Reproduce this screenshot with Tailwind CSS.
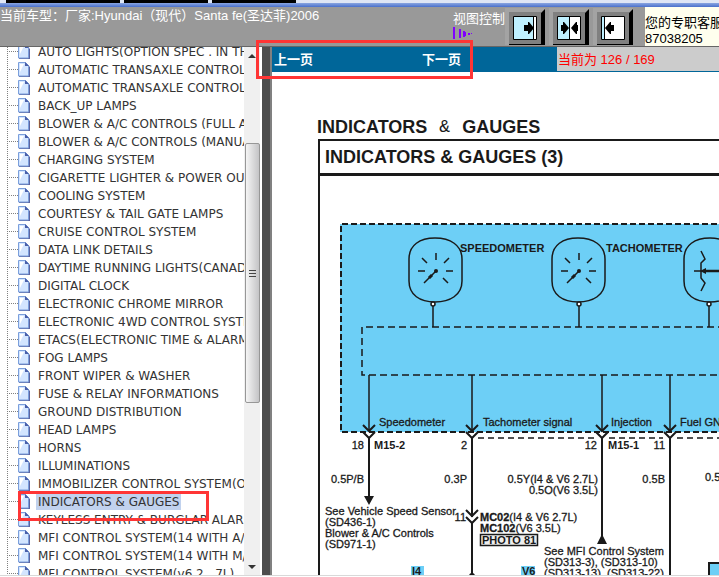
<!DOCTYPE html>
<html lang="zh">
<head>
    <meta charset="UTF-8"/>
    <meta name="viewport" content="width=device-width, initial-scale=1"/>
    <title>电路图 - INDICATORS &amp; GAUGES</title>
    <script src="https://cdn.jsdelivr.net/npm/@tailwindcss/browser@4"></script>
</head>
<body class="relative flex flex-col h-screen overflow-hidden bg-white font-['Liberation_Sans','Noto_Sans_CJK_SC',sans-serif]">
<!-- window frame -->
<div class="flex gap-1 shrink-0 h-[3px] pl-1.5 bg-[#dfe6f5]">
    <div class="w-[114px] bg-black"></div>
    <div class="w-[84px] bg-black"></div>
    <div class="w-[84px] bg-black"></div>
</div>
<div class="shrink-0 h-1 bg-linear-to-b from-[#8aa5e0] to-[#4a70cc]"></div>

<header class="flex shrink-0 h-10 bg-[#999999] border-b border-[#666666] text-white overflow-hidden">
    <div class="flex-1 pt-px text-[13px] leading-4 whitespace-nowrap">当前车型：厂家:Hyundai（现代）Santa fe(圣达菲)2006</div>
    <div class="w-[52px] pt-1 text-[13px] leading-4 whitespace-nowrap">
        视图控制
        <svg class="w-5 h-3" viewBox="0 0 20 12" fill="#8000ff">
            <path d="M0 0h2v12h-2zM6 2h2v9h-2zM10 4h2v6h-2zM12 5h1v4h-1zM15 6h2v2h-2zM18 6h1v1h-1z"/>
        </svg>
    </div>
    <div class="flex gap-1 shrink-0 pt-px">
        <button class="w-10 h-[37px]" aria-label="显示目录">
            <svg class="w-10 h-[37px]" viewBox="0 0 40 37">
                <path d="M0 0h40v37H0z" fill="#a3a3a3"/>
                <path d="M4 4h32v32H4z" fill="#808080"/>
                <path d="M40 1v36H4v-1h32V5z"/>
                <path d="M8.500 8.500h23v23h-23z" fill="#fff" stroke="#000"/>
                <path d="M9 9h19v22H9z" fill="#bff0ff"/>
                <path d="M28 9h1v22h-1zM19 17h4v-3h1l5 6-5 6h-1v-3h-4z"/>
            </svg>
        </button>
        <button class="w-10 h-[37px]" aria-label="左右分栏">
            <svg class="w-10 h-[37px]" viewBox="0 0 40 37">
                <path d="M0 0h40v37H0z" fill="#a3a3a3"/>
                <path d="M4 4h32v32H4z" fill="#808080"/>
                <path d="M40 1v36H4v-1h32V5z"/>
                <path d="M8.500 8.500h23v23h-23z" fill="#fff" stroke="#000"/>
                <path d="M9 9h11v22H9z" fill="#bff0ff"/>
                <path d="M20 9h1v22h-1zM12 17h2v-3h1l5 6-5 6h-1v-3h-2zM29 17h-1v-3h-1l-5 6 5 6h1v-3h1z"/>
            </svg>
        </button>
        <button class="w-10 h-[37px]" aria-label="隐藏目录">
            <svg class="w-10 h-[37px]" viewBox="0 0 40 37">
                <path d="M0 0h40v37H0z" fill="#a3a3a3"/>
                <path d="M4 4h32v32H4z" fill="#808080"/>
                <path d="M40 1v36H4v-1h32V5z"/>
                <path d="M8.500 8.500h23v23h-23z" fill="#fff" stroke="#000"/>
                <path d="M9 9h2v22H9z" fill="#bff0ff"/>
                <path d="M11 9h1v22h-1zM21 17h-3v-3h-1l-5 6 5 6h1v-3h3z"/>
            </svg>
        </button>
    </div>
    <div class="w-[74px] ml-3 pt-2 bg-[#ffffee] text-black text-[13px] leading-4 whitespace-nowrap">您的专职客服<br/>87038205</div>
</header>

<div class="flex flex-1 min-h-0 mb-px border-b border-[#d9d9d9]">
    <!-- contents tree -->
    <nav class="w-[244px] shrink-0 overflow-hidden">
        <ul id="tree" class="-mt-1 ml-[7px] text-[12px] leading-[18px] text-[#333333] font-['DejaVu_Sans',sans-serif] whitespace-nowrap"></ul>
    </nav>

    <!-- tree scrollbar -->
    <div class="flex flex-col items-center w-[18px] shrink-0 bg-[#f0f0f0] border-r-2 border-white">
        <svg class="w-4 h-24 shrink-0" viewBox="0 0 16 96"><path d="M4 11l4-4 4 4z" fill="#333"/></svg>
        <div class="flex flex-col items-center justify-center gap-0.5 w-[15px] h-[260px] shrink-0 border border-[#979797] rounded-xs bg-linear-to-r from-[#f5f5f5] to-[#c4c4c6]">
            <div class="w-[7px] h-px bg-[#444444]"></div>
            <div class="w-[7px] h-px bg-[#444444]"></div>
            <div class="w-[7px] h-px bg-[#444444]"></div>
        </div>
        <svg class="w-4 h-4 mt-auto" viewBox="0 0 16 16"><path d="M4 6l4 4 4-4z" fill="#333"/></svg>
    </div>
    <div class="w-2 shrink-0 bg-[#4d4d4d]"></div>

    <main class="flex flex-col flex-1 min-w-0 border-l-2 border-[#808080]">
        <div class="flex shrink-0 h-[25px] bg-[#006699] text-[13px] leading-[25px]">
            <div class="flex flex-1 justify-between pl-0.5 pr-24 text-white font-bold">
                <a href="#">上一页</a>
                <a href="#">下一页</a>
            </div>
            <div class="w-[162px] h-6 pl-px bg-[#cccccc] text-[#ff0000]">当前为 126 / 169</div>
        </div>

        <article class="flex-1 min-h-0 pt-[46px] pl-[46px] overflow-hidden text-[#1a1a1a]">
            <h1 class="flex gap-3 -ml-px text-[18px] leading-[18px] font-bold whitespace-nowrap">
                INDICATORS <span class="font-normal font-['Liberation_Mono',monospace]">&amp;</span> GAUGES
            </h1>
            <section class="mt-[3px] border-t-2 border-l-2 border-[#1a1a1a]">
                <h2 class="pl-[5px] text-[18px] leading-8 font-bold border-b-3 border-[#1a1a1a] whitespace-nowrap">INDICATORS &amp; GAUGES (3)</h2>
                <svg class="block w-[460px] h-[400px]" viewBox="320 176 460 400" fill="none" stroke="#1a1a1a" stroke-width="1.500">
                    <!-- instrument cluster -->
                    <path d="M340 224h440v208H340z" fill="#6dcff6" stroke="none"/>
                    <path d="M780 224H341v208h439" stroke-width="2" stroke-dasharray="6 3"/>
                    <path d="M780 327H362v48h418" stroke-dasharray="7 4"/>
                    <path d="M478 438h118M609 438h54M677 438h103" stroke-dasharray="6 4"/>

                    <!-- gauges -->
                    <path id="dial" d="M409 259c0-14 11-21 26-21s27 7 27 21v22c0 14-12 21-27 21s-26-7-26-21z"/>
                    <use href="#dial" x="143"/>
                    <use href="#dial" x="275"/>
                    <g id="needle">
                        <path d="M436 253v7M422 258l5 5M449 258l-5 5M418 271h7M446 271h7M443 278l5 5M424 283l12-12"/>
                        <path d="M429 278l3-3" stroke-width="3"/>
                        <circle cx="436" cy="271" r="2" fill="#1a1a1a" stroke="none"/>
                    </g>
                    <use href="#needle" x="143"/>
                    <path d="M701 251l4 8-4 4v15l4 5-4 8M694 271h10"/>
                    <path d="M704 271h20" stroke-width="2.500"/>
                    <path d="M700 271l6-3v6z" fill="#1a1a1a" stroke="none"/>
                    <path d="M433 306v21M579 306v21M709 306v21"/>
                    <g fill="#fff">
                        <circle cx="433" cy="304" r="2"/>
                        <circle cx="579" cy="304" r="2"/>
                        <circle cx="709" cy="304" r="2"/>
                    </g>

                    <!-- wires -->
                    <path d="M369 375v56M472 375v56M602 375v56M670 375v56"/>
                    <path id="joint" d="M363 425l6 6 6-6M363 432l6 6 6-6" stroke-width="2"/>
                    <use href="#joint" x="103"/>
                    <use href="#joint" x="233"/>
                    <use href="#joint" x="301"/>
                    <use href="#joint" x="103" y="85"/>
                    <path d="M369 438v60M472 438v79M472 523v53M602 438v100M670 438v138" stroke-width="2"/>
                    <path d="M364 496h10l-5 9zM597 544h10l-5-10z" fill="#1a1a1a" stroke="none"/>
                    <circle cx="472" cy="576" r="3" fill="#1a1a1a" stroke="none"/>
                    <path d="M780 563h-71v13" stroke-width="2"/>
                    <path d="M710 564h70v12h-70zM411 566h13v10h-13zM521 566h14v10h-14z" fill="#6dcff6" stroke="none"/>
                    <path d="M480.500 534.500h57v11h-57z" fill="#eee"/>

                    <g class="text-[11px]" fill="#1a1a1a" stroke-width="0.300">
                        <text x="379" y="426">Speedometer</text>
                        <text x="483" y="426">Tachometer signal</text>
                        <text x="611" y="426">Injection</text>
                        <text x="680" y="426">Fuel GND</text>
                        <text x="364" y="449" text-anchor="end">18</text>
                        <text x="467" y="449" text-anchor="end">2</text>
                        <text x="597" y="449" text-anchor="end">12</text>
                        <text x="665" y="449" text-anchor="end">11</text>
                        <text x="364" y="483" text-anchor="end">0.5P/B</text>
                        <text x="467" y="483" text-anchor="end">0.3P</text>
                        <text x="598" y="483" text-anchor="end">0.5Y(I4 &amp; V6 2.7L)</text>
                        <text x="598" y="494" text-anchor="end">0.5O(V6 3.5L)</text>
                        <text x="665" y="483" text-anchor="end">0.5B</text>
                        <text x="705" y="481">0.5</text>
                        <text x="325" y="515">See Vehicle Speed Sensor</text>
                        <text x="325" y="526">(SD436-1)</text>
                        <text x="325" y="537">Blower &amp; A/C Controls</text>
                        <text x="325" y="548">(SD971-1)</text>
                        <text x="466" y="521" text-anchor="end">11</text>
                        <text x="544" y="555">See MFI Control System</text>
                        <text x="544" y="566">(SD313-3), (SD313-10)</text>
                        <text x="544" y="577">(SD313-13), (SD313-22)</text>
                        <text x="480" y="521"><tspan class="font-bold">MC02</tspan>(I4 &amp; V6 2.7L)</text>
                        <text x="480" y="532"><tspan class="font-bold">MC102</tspan>(V6 3.5L)</text>
                    </g>
                    <g class="text-[11px] font-bold" fill="#1a1a1a" stroke="none">
                        <text x="460" y="252">SPEEDOMETER</text>
                        <text x="606" y="252">TACHOMETER</text>
                        <text x="374" y="449">M15-2</text>
                        <text x="608" y="449">M15-1</text>
                        <text x="482" y="544">PHOTO 81</text>
                        <text x="412" y="575">I4</text>
                        <text x="522" y="575">V6</text>
                    </g>
                </svg>
            </section>
        </article>
    </main>
</div>

<!-- highlight frames -->
<div class="absolute left-[18px] top-[491px] w-[191px] h-[30px] border-3 border-[#ff3535] pointer-events-none"></div>
<div class="absolute left-64 top-10 w-[217px] h-[39px] border-3 border-[#ff3535] pointer-events-none"></div>

<script>
    const items = [
        'AUTO LIGHTS(OPTION SPEC . IN THE',
        'AUTOMATIC TRANSAXLE CONTROL',
        'AUTOMATIC TRANSAXLE CONTROL',
        'BACK_UP LAMPS',
        'BLOWER & A/C CONTROLS (FULL AUTO)',
        'BLOWER & A/C CONTROLS (MANUAL)',
        'CHARGING SYSTEM',
        'CIGARETTE LIGHTER & POWER OUTLET',
        'COOLING SYSTEM',
        'COURTESY & TAIL GATE LAMPS',
        'CRUISE CONTROL SYSTEM',
        'DATA LINK DETAILS',
        'DAYTIME RUNNING LIGHTS(CANADA)',
        'DIGITAL CLOCK',
        'ELECTRONIC CHROME MIRROR',
        'ELECTRONIC 4WD CONTROL SYSTEM',
        'ETACS(ELECTRONIC TIME & ALARM',
        'FOG LAMPS',
        'FRONT WIPER & WASHER',
        'FUSE & RELAY INFORMATIONS',
        'GROUND DISTRIBUTION',
        'HEAD LAMPS',
        'HORNS',
        'ILLUMINATIONS',
        'IMMOBILIZER CONTROL SYSTEM(ONLY',
        'INDICATORS & GAUGES',
        'KEYLESS ENTRY & BURGLAR ALARM',
        'MFI CONTROL SYSTEM(14 WITH A/T)',
        'MFI CONTROL SYSTEM(14 WITH M/T)',
        'MFI CONTROL SYSTEM(v6 2 . 7L)'
    ]
    const current = 'INDICATORS & GAUGES'

    // dotted branch lines + page icon
    const pageIcon = `
        <svg class="w-[29px] h-[18px] shrink-0" viewBox="0 0 29 18">
            <path d="M.5 0v18M2 8.500h9" fill="none" stroke="#808080" stroke-dasharray="1 1"/>
            <path d="M12 3h8l3 3v10H12z" fill="#5c64a0"/>
            <path d="M11.500 1.500h7l3 3v10.500h-10z" fill="#d3e5ff" stroke="#7b9fdc"/>
            <path d="M13 3h4l-4 8z" fill="#fff"/>
            <path d="M18 1l4 4h-4z" fill="#4a5fa8"/>
        </svg>`

    const tree = document.getElementById('tree')

    items.forEach(function (name) {
        const li = document.createElement('li')
        li.className = 'flex items-center'
        li.innerHTML = pageIcon

        const a = document.createElement('a')
        a.href = '#'
        a.className = name === current ? 'px-0.5 leading-4 bg-[#c1d2ee]' : 'px-0.5 leading-4'
        a.textContent = name
        li.append(a)
        tree.append(li)
    })
</script>
</body>
</html>
